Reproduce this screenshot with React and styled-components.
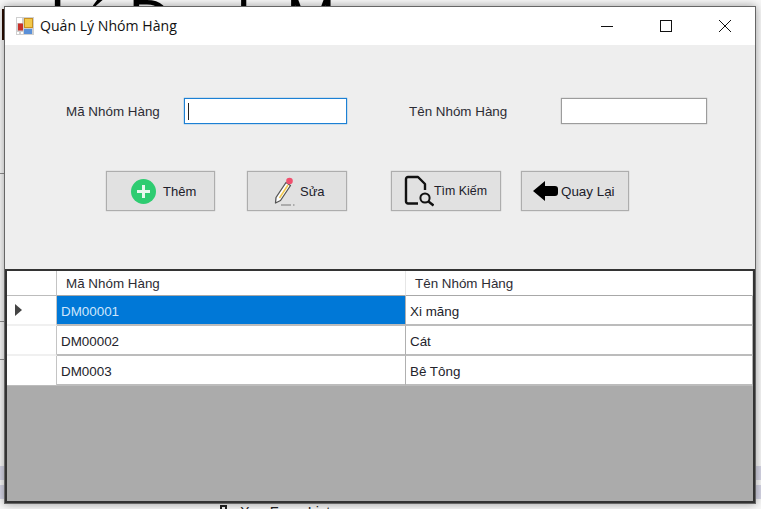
import React from 'react';
import styled, { createGlobalStyle } from 'styled-components';

const Global = createGlobalStyle`
  html, body { margin: 0; padding: 0; background: #fff; overflow: hidden; }
  * { box-sizing: border-box; }
`;

const Desktop = styled.div`
  position: relative;
  width: 761px;
  height: 509px;
  overflow: hidden;
  background: #f8f8f8;
  font-family: "Liberation Sans", Arial, sans-serif;
`;

const BackdropTitle = styled.div`
  position: absolute;
  left: 50px;
  top: -14px;
  font-size: 59px;
  line-height: 70px;
  white-space: pre;
  color: #000;
`;

const BackdropEdge = styled.div`
  position: absolute;
  left: 2px;
  top: 9px;
  width: 3px;
  height: 31px;
  background: #2a0c00;
`;

const BackdropRule = styled.div`
  position: absolute;
  left: 0;
  top: ${p => p.$y}px;
  width: 5px;
  height: 1px;
  background: #8f8f8f;
`;

const BackdropBand = styled.div`
  position: absolute;
  left: 0;
  right: 0;
  top: ${p => p.$y}px;
  height: ${p => p.$h}px;
  background: #d6d6e6;
`;

const BackdropGlyph = styled.div`
  position: absolute;
  left: 220px;
  top: 505px;
  width: 7px;
  height: 6px;
  border: 2px solid #222;
`;

const BackdropFooter = styled.div`
  position: absolute;
  left: 240px;
  top: 505px;
  font-size: 14.5px;
  line-height: 14px;
  color: #222;
  white-space: pre;
`;

const Window = styled.div`
  position: absolute;
  left: 4px;
  top: 6px;
  width: 752px;
  height: 498px;
  display: flex;
  flex-direction: column;
  background: #eeeeee;
  border: 1px solid #666;
  box-shadow: 0 0 9px rgba(0, 0, 0, 0.38);
`;

const TitleBar = styled.div`
  height: 38px;
  flex: none;
  display: flex;
  align-items: center;
  background: #fff;
  padding-left: 11px;
`;

const Caption = styled.span`
  margin: 0 0 2px 6px;
  font-family: "Open Sans", sans-serif;
  font-size: 14.1px;
  color: #111;
`;

const WindowControls = styled.div`
  margin-left: auto;
  padding-right: 1px;
  display: flex;
  height: 100%;
`;

const ControlButton = styled.div`
  width: 59px;
  display: flex;
  align-items: center;
  justify-content: center;
`;

const Form = styled.div`
  flex: none;
  height: 224px;
`;

const FieldRow = styled.div`
  display: flex;
  align-items: center;
  height: 26px;
  margin-top: 53px;
  padding-left: 61px;
`;

const Label = styled.label`
  font-size: 13.4px;
  color: #2c2c34;
  width: ${p => p.$w}px;
  flex: none;
`;

const TextBox = styled.div`
  width: ${p => p.$w}px;
  height: 26px;
  flex: none;
  background: #fff;
  border: 1px solid ${p => (p.$focus ? '#1c80d4' : '#9c9c9c')};
  box-shadow: 0 0 1px ${p => (p.$focus ? '#1c80d4' : '#9c9c9c')};
  margin-right: ${p => p.$mr || 0}px;
  padding: 4px 3px;
`;

const Caret = styled.div`
  width: 1px;
  height: 17px;
  background: #222;
`;

const ButtonRow = styled.div`
  display: flex;
  padding-left: 101px;
  margin-top: 47px;
`;

const ActionButton = styled.button`
  width: ${p => p.$w}px;
  height: 40px;
  flex: none;
  margin-right: ${p => p.$mr || 0}px;
  padding: 0 0 0 ${p => p.$pl}px;
  display: flex;
  align-items: center;
  justify-content: flex-start;
  gap: ${p => p.$gap}px;
  background: #e1e1e1;
  border: 1px solid #adadad;
  box-shadow: 0 0 1px #adadad;
  font-family: "Liberation Sans", Arial, sans-serif;
  font-size: ${p => p.$fs}px;
  color: #20202a;
`;

const Grid = styled.div`
  flex: 1;
  background: #ababab;
  border: 2px solid #333;
  display: flex;
  flex-direction: column;
`;

const GridRow = styled.div`
  display: grid;
  grid-template-columns: 50px 349px 1fr;
  height: ${p => (p.$header ? 25 : 30)}px;
  background: #fff;
`;

const RowHead = styled.div`
  border-right: 1px solid #c4c4c4;
  border-bottom: ${p => (p.$last || p.$header ? '1px solid #bcbcbc' : '2px solid #f0f0f0')};
  display: flex;
  align-items: center;
  padding-left: 8px;
`;

const HeaderCell = styled.div`
  height: 25px;
  padding-left: ${p => p.$pl}px;
  font-size: 13.4px;
  line-height: 26px;
  color: #2c2c34;
  border-right: 1px solid #e6e6e6;
  border-bottom: 1px solid #a8a8a8;
`;

const Cell = styled.div`
  height: 30px;
  padding: 2px 0 0 4px;
  font-size: 13.4px;
  line-height: 28px;
  color: ${p => (p.$selected ? '#cfe6fb' : '#23232b')};
  background: ${p => (p.$selected ? '#0078d7' : '#fff')};
  border-right: 1px solid #b0b0b0;
  border-bottom: 2px solid #bcbcbc;
`;

const Arrow = styled.div`
  width: 0;
  height: 0;
  border-left: 7px solid #444;
  border-top: 6px solid transparent;
  border-bottom: 6px solid transparent;
`;

const AppIcon = () => (
  <svg width="18" height="18" viewBox="0 0 18 18">
    <rect width="18" height="18" fill="#cfcfcf" />
    <rect x="1" y="1" width="5" height="5" fill="#fff" />
    <rect x="2" y="6.5" width="5" height="7" fill="#c8312a" />
    <rect x="8.5" y="1.5" width="8" height="9" fill="#f2c84a" stroke="#c89020" />
    <rect x="8" y="12" width="8" height="5" fill="#5a90d8" />
    <rect x="1" y="15" width="2" height="2" fill="#fff" />
    <rect x="5" y="15" width="2" height="2" fill="#fff" />
  </svg>
);

const PlusIcon = () => (
  <svg width="25" height="25" viewBox="0 0 25 25">
    <circle cx="12.5" cy="12.5" r="12.5" fill="#2ecc71" />
    <path d="M12.5 6v13M6 12.5h13" stroke="#e8f8ee" strokeWidth="3" />
  </svg>
);

const PencilIcon = () => (
  <svg width="22" height="30" viewBox="0 0 22 30">
    <path d="M1.5 27L2 21.5L12 6.5L16.5 9.5L6.5 24.5Z" fill="#fff" stroke="#555" strokeWidth="1.3" strokeLinejoin="round" />
    <path d="M5.5 22L14 9" stroke="#f0c850" strokeWidth="1.6" />
    <circle cx="15.5" cy="5" r="3.3" fill="#f0506e" />
    <path d="M7 29h10M19 29h1.5" stroke="#777" strokeWidth="1.2" />
  </svg>
);

const FindIcon = () => (
  <svg width="30" height="32" viewBox="0 0 30 32" fill="none" stroke="#111">
    <path d="M14 28.5H4a2 2 0 0 1-2-2V4a2 2 0 0 1 2-2h10l7 7v6" strokeWidth="2.4" strokeLinejoin="round" />
    <circle cx="21" cy="23" r="4.6" strokeWidth="2" />
    <path d="M24.5 26.5l5 4" strokeWidth="2.4" />
  </svg>
);

const BackIcon = () => (
  <svg width="25" height="20" viewBox="0 0 25 20">
    <path d="M0 10L12 0v5h10a3 3 0 0 1 3 3v4a3 3 0 0 1-3 3H12v5z" fill="#000" />
  </svg>
);

const rows = [
  ['DM00001', 'Xi măng', true],
  ['DM00002', 'Cát', false],
  ['DM0003', 'Bê Tông', false],
];

export default function App() {
  return (
    <Desktop>
      <Global />
      <BackdropBand $y={466} $h={14} />
      <BackdropBand $y={485} $h={14} />
      <BackdropRule $y={173} />
      <BackdropRule $y={321} />
      <BackdropRule $y={359} />
      <BackdropTitle>Lý Danh Mục</BackdropTitle>
      <BackdropEdge />
      <BackdropGlyph />
      <BackdropFooter>Xoa Form List</BackdropFooter>
      <Window>
        <TitleBar>
          <AppIcon />
          <Caption>Quản Lý Nhóm Hàng</Caption>
          <WindowControls>
            <ControlButton>
              <svg width="12" height="12" viewBox="0 0 12 12"><path d="M0 6.5h12" stroke="#111" /></svg>
            </ControlButton>
            <ControlButton>
              <svg width="12" height="12" viewBox="0 0 12 12"><rect x=".5" y=".5" width="11" height="11" fill="none" stroke="#111" /></svg>
            </ControlButton>
            <ControlButton>
              <svg width="12" height="12" viewBox="0 0 12 12"><path d="M0 0l12 12M12 0L0 12" stroke="#111" /></svg>
            </ControlButton>
          </WindowControls>
        </TitleBar>
        <Form>
          <FieldRow>
            <Label $w={118}>Mã Nhóm Hàng</Label>
            <TextBox $w={163} $focus $mr={62}><Caret /></TextBox>
            <Label $w={152}>Tên Nhóm Hàng</Label>
            <TextBox $w={146} />
          </FieldRow>
          <ButtonRow>
            <ActionButton $w={109} $mr={32} $pl={24} $gap={7} $fs={13}><PlusIcon />Thêm</ActionButton>
            <ActionButton $w={100} $mr={44} $pl={26} $gap={4} $fs={13}><PencilIcon />Sửa</ActionButton>
            <ActionButton $w={110} $mr={20} $pl={12} $gap={0} $fs={12.4}><FindIcon />Tìm Kiếm</ActionButton>
            <ActionButton $w={108} $pl={11} $gap={3} $fs={13.4}><BackIcon />Quay Lại</ActionButton>
          </ButtonRow>
        </Form>
        <Grid>
          <GridRow $header>
            <RowHead $header />
            <HeaderCell $pl={9}>Mã Nhóm Hàng</HeaderCell>
            <HeaderCell $pl={9}>Tên Nhóm Hàng</HeaderCell>
          </GridRow>
          {rows.map(([code, name, selected], i) => (
            <GridRow key={code}>
              <RowHead $last={i === rows.length - 1}>{selected && <Arrow />}</RowHead>
              <Cell $selected={selected}>{code}</Cell>
              <Cell>{name}</Cell>
            </GridRow>
          ))}
        </Grid>
      </Window>
    </Desktop>
  );
}
